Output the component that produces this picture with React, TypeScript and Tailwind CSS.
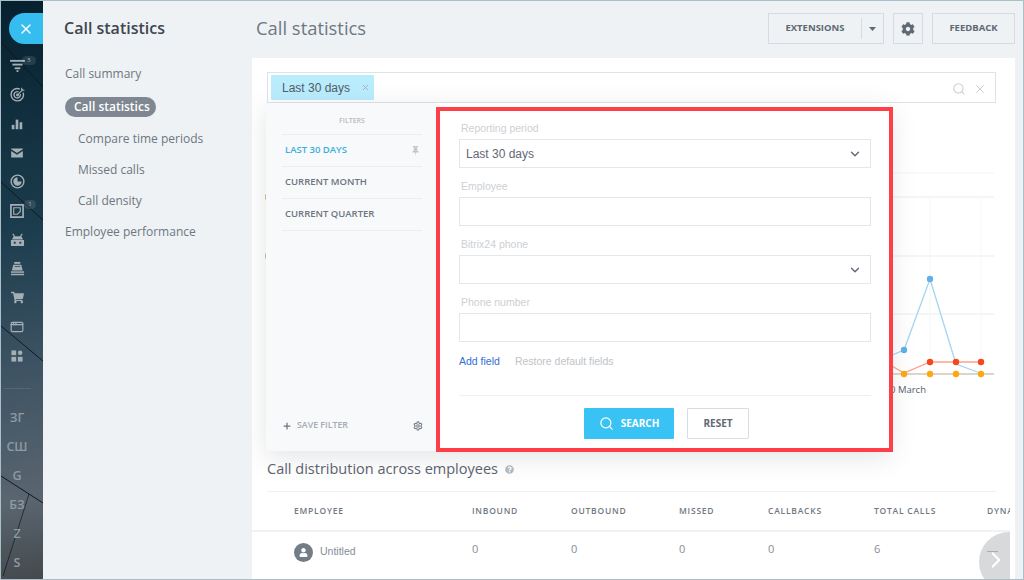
import React from 'react';
import { ChevronDown, ChevronRight, Search, X, AppWindow, Plus, Settings } from 'lucide-react';
import { FaShoppingCart, FaCog, FaUser, FaQuestionCircle } from 'react-icons/fa';

const BarsIcon = () => (
  <svg width="14" height="14" viewBox="0 0 16 16" fill="currentColor">
    <rect x="2" y="9" width="3" height="5" />
    <rect x="6.5" y="3" width="3" height="11" />
    <rect x="11" y="6" width="3" height="8" />
  </svg>
);

const FunnelIcon = () => (
  <svg width="15" height="13" viewBox="0 0 16 14" fill="currentColor">
    <rect x="0" y="1" width="16" height="2" />
    <rect x="2.5" y="5" width="11" height="2" />
    <rect x="5" y="9" width="6" height="2" />
    <rect x="7" y="12" width="2" height="2" />
  </svg>
);

const TargetIcon = () => (
  <svg width="15" height="15" viewBox="0 0 16 16" fill="none" stroke="currentColor" strokeWidth="1.5">
    <path d="M10.5 2.2 A6.6 6.6 0 1 0 14 6" />
    <path d="M9 5.2 A3.4 3.4 0 1 0 11 7.6" />
    <circle cx="8" cy="8.5" r="0.8" fill="currentColor" />
    <path d="M8 8.5 L14 2.5 M12.5 0.8 V3.5 H15.4" strokeWidth="1.2" />
  </svg>
);

const MailIcon = () => (
  <svg width="12" height="10" viewBox="0 0 14 12" fill="currentColor">
    <path d="M0 1.5 L7 6 L14 1.5 V0.5 H0 Z" />
    <path d="M0 3.5 V11.5 H14 V3.5 L7 8 Z" />
  </svg>
);

const ClockIcon = () => (
  <svg width="15" height="15" viewBox="0 0 16 16">
    <circle cx="8" cy="8" r="6.8" fill="none" stroke="currentColor" strokeWidth="1.5" />
    <path d="M8 3.5 A4.5 4.5 0 1 0 12.5 8 H8 Z" fill="currentColor" />
  </svg>
);

const TaskIcon = () => (
  <svg width="14" height="14" viewBox="0 0 15 15" fill="none" stroke="currentColor">
    <path d="M1 1 H14 V14 H1 Z" strokeWidth="1.8" />
    <path d="M4 4 H11 V8 L8 11 H4 Z" strokeWidth="1.2" />
  </svg>
);

const RobotIcon = () => (
  <svg width="15" height="14" viewBox="0 0 16 15" fill="currentColor">
    <path d="M3 1 L5 4 M13 1 L11 4" stroke="currentColor" strokeWidth="1.3" />
    <path d="M4 3.5 H12 L14 7 H2 Z" />
    <path d="M1 7.5 H15 V13 Q15 14 14 14 H2 Q1 14 1 13 Z M4 9.5 V11.5 H6 V9.5 Z M10 9.5 V11.5 H12 V9.5 Z" fillRule="evenodd" />
  </svg>
);

const RegisterIcon = () => (
  <svg width="15" height="15" viewBox="0 0 16 16" fill="currentColor">
    <path d="M4.5 1 H11 V3 H4.5 Z" />
    <path d="M3.5 4 H12 L13.5 10 H2 Z M5 5.5 V6.5 H11 V5.5 Z" fillRule="evenodd" />
    <rect x="1" y="11" width="14" height="1.6" />
    <rect x="1" y="13.6" width="14" height="1.6" />
  </svg>
);

const GridIcon = () => (
  <svg width="12" height="12" viewBox="0 0 14 14" fill="currentColor">
    <rect x="0.5" y="0.5" width="5.5" height="5.5" />
    <circle cx="10.7" cy="3.2" r="2.6" />
    <rect x="0.5" y="8" width="5.5" height="5.5" />
    <rect x="8" y="8" width="5.5" height="5.5" />
  </svg>
);

const PinIcon = () => (
  <svg width="7" height="10" viewBox="0 0 7 10" fill="currentColor">
    <rect x="1" y="0" width="5" height="1.4" />
    <rect x="1.8" y="1.4" width="3.4" height="3.6" />
    <path d="M0.5 5 H6.5 V6.4 H4 L3.5 10 L3 6.4 H0.5 Z" />
  </svg>
);

const railIcons = [
  <FunnelIcon />,
  <TargetIcon />,
  <BarsIcon />,
  <MailIcon />,
  <ClockIcon />,
  <TaskIcon />,
  <RobotIcon />,
  <RegisterIcon />,
  <FaShoppingCart size={13} />,
  <AppWindow size={14} strokeWidth={2} />,
  <GridIcon />,
];

const railLetters = ['ЗГ', 'СШ', 'G', 'БЗ', 'Z', 'S'];

const Rail = () => (
  <div className="relative w-[42px] shrink-0 overflow-hidden bg-[linear-gradient(170deg,#06202e_0%,#1c3d4e_40%,#3c5262_62%,#5a6570_86%,#44494c_100%)]">
    <svg className="absolute inset-0" width="42" height="578" fill="none" stroke="#0d1a22" strokeWidth="1">
      <path d="M0 41 L42 86" />
      <path d="M0 181 L42 219" />
      <path d="M0 325 L42 360" />
      <path d="M0 475 L42 502" />
      <path d="M28 493 L2 575" strokeWidth="0.7" />
      <path d="M42 130 L24 200" stroke="#1d3542" strokeWidth="0.7" />
    </svg>
    <div className="relative flex w-8 flex-col pt-[50px] text-[#a3afb5]">
      {railIcons.map((icon, i) => (
        <div key={i} className="flex h-[29px] items-center justify-center">{icon}</div>
      ))}
      <div className="mt-[18px] ml-[2px] h-px w-[28px] bg-white/10" />
      <div className="mt-[15px] flex flex-col">
        {railLetters.map((l) => (
          <div key={l} className="flex h-[29px] items-center justify-center text-[12.5px] font-semibold text-[#8f9aa1]">{l}</div>
        ))}
      </div>
    </div>
    <div className="absolute top-[12px] left-[8px] flex h-[31px] w-[34px] items-center rounded-l-full bg-[#35bdf0] pl-[9px] text-white">
      <X size={16} strokeWidth={2} />
    </div>
    <span className="absolute top-[55px] left-[21px] flex h-[9px] w-[14px] items-center justify-center rounded-full bg-white/10 text-[6px] text-[#a9b5bb]">5</span>
    <span className="absolute top-[199px] left-[23px] flex h-[9px] w-[12px] items-center justify-center rounded-full bg-white/10 text-[6px] text-[#a9b5bb]">1</span>
  </div>
);

const SideMenu = () => (
  <div className="w-[209px] shrink-0 pt-[16px] pl-[21px] text-[12px] text-[#6d7681]">
    <div className="text-[16px] leading-[22px] font-semibold text-[#3f4650]">Call statistics</div>
    <div className="mt-[26px] ml-[1px] flex h-[18px] items-center">Call summary</div>
    <div className="mt-[14px] ml-[1px] flex h-[20px] w-[91px] items-center rounded-full bg-[#7e8792] pl-[9px] font-semibold whitespace-nowrap text-white">Call statistics</div>
    <div className="mt-[13px] ml-[1px] flex h-[18px] items-center pl-[13px]">Compare time periods</div>
    <div className="mt-[13px] ml-[1px] flex h-[18px] items-center pl-[13px]">Missed calls</div>
    <div className="mt-[13px] ml-[1px] flex h-[18px] items-center pl-[13px]">Call density</div>
    <div className="mt-[13px] ml-[1px] flex h-[18px] items-center">Employee performance</div>
  </div>
);

const Header = () => (
  <div className="flex h-[57px] shrink-0 items-start justify-between pt-[12px] pr-[8px] pl-[4px]">
    <div className="text-[18.4px] leading-[30px] text-[#6f7883]">Call statistics</div>
    <div className="flex gap-[9px] text-[9.5px] font-bold text-[#5f6873]">
      <div className="flex h-[31px] w-[116px] items-center border border-[#d5dbe0]">
        <span className="flex h-[21px] w-[93px] items-center justify-center border-r border-[#d5dbe0]">EXTENSIONS</span>
        <svg className="ml-[7px]" width="7" height="4" viewBox="0 0 7 4" fill="currentColor"><path d="M0 0 H7 L3.5 4 Z" /></svg>
      </div>
      <div className="flex h-[31px] w-[30px] items-center justify-center border border-[#d5dbe0]">
        <FaCog size={14} />
      </div>
      <div className="flex h-[31px] w-[83px] items-center justify-center border border-[#d5dbe0]">FEEDBACK</div>
    </div>
  </div>
);

const Chart = () => (
  <svg className="block overflow-visible" width="729" height="356" viewBox="267 103 729 356" fill="none">
    <rect x="265.2" y="194.5" width="1.5" height="5" fill="#cfa877" />
    <rect x="265.2" y="253.5" width="1.5" height="5" fill="#cfa877" />
    <path d="M880 173 H994" stroke="#f3f4f6" />
    <path d="M880 197 H994 M880 256 H994 M880 314 H994" stroke="#e9ebee" />
    <path d="M930 197 V374 M981 197 V374" stroke="#f5f6f8" />
    <path d="M880 374 H994" stroke="#cfc9bb" strokeWidth="1.5" />
    <path d="M885 358 L904 350 L930 279 L956 364 L980 373" stroke="#a3d4f2" strokeWidth="1.3" />
    <path d="M885 362 L904 373 L930 362 L956 362 L980 362" stroke="#ffa08a" strokeWidth="1.3" />
    {[[904, 350], [930, 279]].map(([x, y]) => <circle key={x} cx={x} cy={y} r="3.2" fill="#62b1e6" />)}
    {[930, 956, 981].map((x) => <circle key={x} cx={x} cy="362" r="3.2" fill="#f4471c" />)}
    {[904, 930, 956, 981].map((x) => <circle key={x} cx={x} cy="374" r="3.2" fill="#ffa70f" />)}
    <text x="890" y="393" fontSize="9.5" fill="#555e6b" fontFamily="Open Sans, sans-serif">0 March</text>
  </svg>
);

const Field = ({ label, value, chevron }: { label: string; value?: string; chevron?: boolean }) => (
  <div className="mb-[10px]">
    <div className="mb-[3px] h-[16px] pl-[2px] text-[10.5px] leading-[16px] text-[#cdd0d4]">{label}</div>
    <div className="flex h-[29px] items-center justify-between border border-[#e4e6e9] pr-[8px] pl-[6px] text-[12px] text-[#5f6875]">
      <span>{value}</span>
      {chevron && <ChevronDown size={14} strokeWidth={2.4} className="text-[#5f6875]" />}
    </div>
  </div>
);

const FilterPopup = () => (
  <div className="absolute top-[45px] left-[14px] flex h-[348px] w-[624px] bg-white shadow-[0_6px_24px_rgba(80,90,100,0.16)]">
    <div className="flex w-[170px] shrink-0 flex-col bg-[#f8f9fb] pr-[14px] pl-[16px] text-[9.5px] font-semibold text-[#6d7580]">
      <div className="flex h-[32px] items-center justify-center border-b border-[#eceef1] pt-[5px] text-[7px] text-[#b7bcc2]">FILTERS</div>
      <div className="flex h-[32px] items-center justify-between border-b border-[#eceef1] px-[3px] text-[#39afdc]">
        <span>LAST 30 DAYS</span>
        <span className="text-[#c4c8cd]"><PinIcon /></span>
      </div>
      <div className="flex h-[32px] items-center border-b border-[#eceef1] pl-[3px]">CURRENT MONTH</div>
      <div className="flex h-[32px] items-center border-b border-[#eceef1] pl-[3px]">CURRENT QUARTER</div>
      <div className="mt-auto mb-[17px] flex h-[16px] items-center justify-between text-[8.8px] text-[#a5abb2]">
        <span className="flex items-center">
          <Plus size={10} strokeWidth={3} className="mr-[5px] text-[#6d7580]" />
          SAVE FILTER
        </span>
        <Settings size={10} strokeWidth={2.8} className="mr-[-1px] text-[#7a828c]" />
      </div>
    </div>
    <div className="flex-1 pt-[17px] pr-[19px] pl-[23px] font-['Liberation_Sans',sans-serif]">
      <Field label="Reporting period" value="Last 30 days" chevron />
      <Field label="Employee" />
      <Field label="Bitrix24 phone" chevron />
      <Field label="Phone number" />
      <div className="mt-[12px] flex h-[16px] items-center text-[10.5px]">
        <span className="text-[#2f6fd6]">Add field</span>
        <span className="ml-[15px] text-[#c0c3c7]">Restore default fields</span>
      </div>
      <div className="mt-[25px] flex justify-center gap-[13px] border-t border-[#eff0f2] pt-[12px] pl-[3px] font-['Open_Sans',sans-serif] text-[10px] font-bold">
        <div className="flex h-[31px] w-[90px] items-center justify-center gap-[7px] rounded-[1px] bg-[#38c3f4] text-white">
          <Search size={15} strokeWidth={2} />
          SEARCH
        </div>
        <div className="flex h-[31px] w-[62px] items-center justify-center rounded-[1px] border border-[#d9dde1] text-[#5f6873]">RESET</div>
      </div>
    </div>
  </div>
);

const columns = ['EMPLOYEE', 'INBOUND', 'OUTBOUND', 'MISSED', 'CALLBACKS', 'TOTAL CALLS', 'DYNAMICS'];
const gridCols = 'grid grid-cols-[220px_99px_108px_89px_106px_113px_1fr]';

const EmployeeTable = () => (
  <div className="relative -mx-[15px] mr-[-14px] h-[88px] overflow-hidden">
    <div className={`${gridCols} h-[40px] items-center border-b-2 border-[#eff1f3] text-[8.5px] font-semibold tracking-[0.09em] whitespace-nowrap text-[#6f7883]`}>
      {columns.map((c, i) => (
        <div key={c} className={i === 0 ? 'pl-[42px]' : ''}>{c}</div>
      ))}
    </div>
    <div className={`${gridCols} h-[48px] text-[11px] text-[#868d96]`}>
      <div className="flex items-center pb-[8px] pl-[42px] font-['Liberation_Sans',sans-serif] text-[10.5px]">
        <span className="mr-[7px] flex h-[19px] w-[19px] items-center justify-center rounded-full bg-[#737c87] text-white"><FaUser size={9} /></span>
        Untitled
      </div>
      <div className="pt-[9px]">0</div>
      <div className="pt-[9px]">0</div>
      <div className="pt-[9px]">0</div>
      <div className="pt-[9px]">0</div>
      <div className="pt-[9px]">6</div>
      <div className="pt-[19px]"><div className="h-px w-[11px] bg-[#8a9199]" /></div>
    </div>
    <div className="absolute top-[40px] left-[727px] flex h-[60px] w-[60px] items-center rounded-full bg-[#bcc0c3]/60 pb-[4px] pl-[4px] text-white">
      <ChevronRight size={26} strokeWidth={2} />
    </div>
  </div>
);

const Card = () => (
  <div className="relative mr-[8px] flex-1 overflow-hidden bg-white pt-[14px] pr-[19px] pl-[15px]">
    <div className="flex h-[31px] items-center justify-between border border-[#dfe3e7] pr-[8px] pl-[3px] font-['Liberation_Sans',sans-serif]">
      <div className="flex h-[25px] w-[103px] items-center justify-between rounded-[1px] bg-[#b9ecfc] pr-[4px] pl-[11px] text-[12px] text-[#535c68]">
        Last 30 days
        <X size={9} strokeWidth={2.5} className="text-[#a5b3bb]" />
      </div>
      <div className="flex items-center gap-[7px] pt-[2px] text-[#c8cdd2]">
        <Search size={14} strokeWidth={1.8} />
        <X size={14} strokeWidth={1.6} />
      </div>
    </div>
    <Chart />
    <div className="flex h-[20px] items-center text-[14.5px] text-[#5b636e]">
      Call distribution across employees
      <FaQuestionCircle size={9} className="ml-[7px] text-[#b5babf]" />
    </div>
    <div className="mt-[12px] h-px bg-[#eff1f3]" />
    <EmployeeTable />
    <FilterPopup />
    <div className="absolute top-[49px] left-[184px] h-[345px] w-[457px] border-[4px] border-[#ff3f47]" />
  </div>
);

export default function App() {
  return (
    <div className="flex h-[580px] w-[1024px] overflow-hidden border border-[#a9bfca] bg-[#eef2f4] font-['Open_Sans',sans-serif]">
      <Rail />
      <SideMenu />
      <div className="flex min-w-0 flex-1 flex-col">
        <Header />
        <Card />
      </div>
    </div>
  );
}
